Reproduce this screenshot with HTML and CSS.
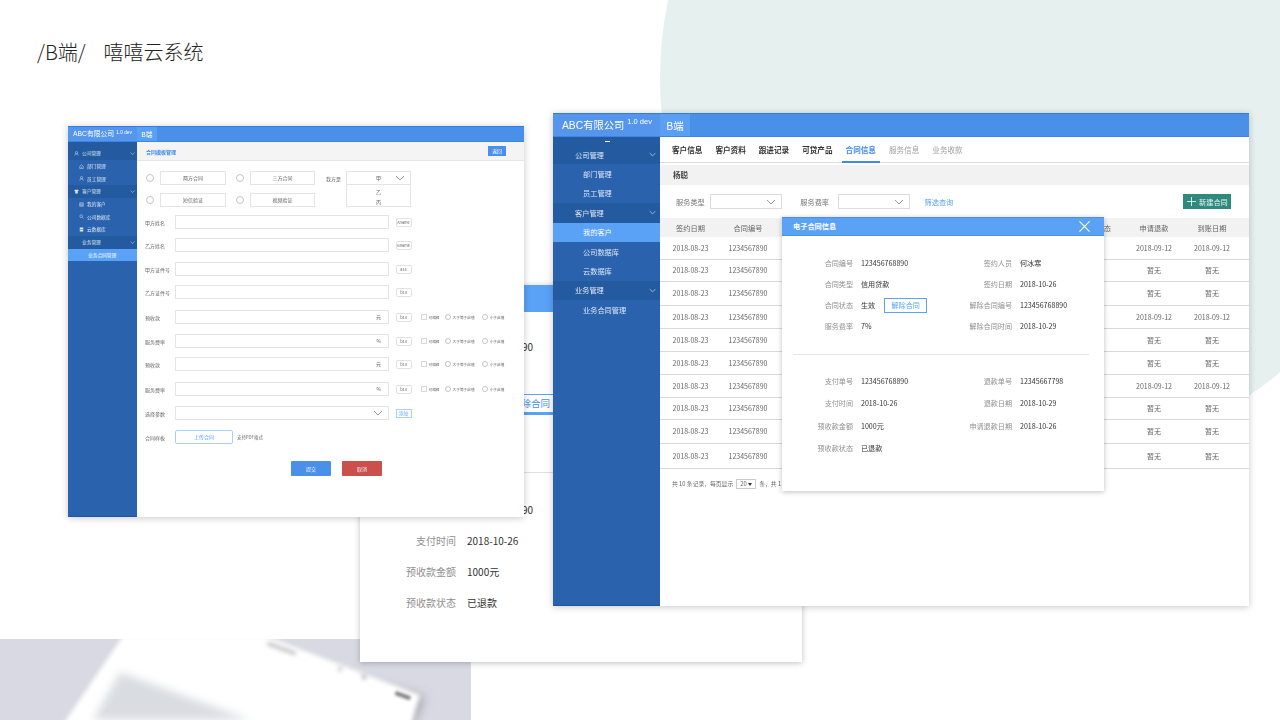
FILE: index.html
```html
<!DOCTYPE html>
<html lang="zh-CN">
<head>
  <meta charset="UTF-8" />
  <title>嘻嘻云系统</title>
  <link rel="stylesheet" href="styles.css">
</head>
<body>
  <svg class="sprite" width="0" height="0">
    <symbol id="chev" viewBox="0 0 10 6"><path d="M1 1l4 4 4-4" fill="none" stroke="currentColor" stroke-width="1"/></symbol>
    <symbol id="user" viewBox="0 0 10 10"><path d="M5 1a2.2 2.2 0 0 1 0 4.600a2.200 2.200 0 0 1 0-4.600zM1.500 9c.3-2.400 1.500-3.400 3.500-3.400S8.200 6.600 8.500 9" fill="none" stroke="currentColor"/></symbol>
    <symbol id="home" viewBox="0 0 10 10"><path d="M1.500 9V4.500L5 1.500l3.500 3V9zM3.500 6.500h3" fill="none" stroke="currentColor"/></symbol>
    <symbol id="shirt" viewBox="0 0 10 10"><path d="M3 1L.5 2.800 1.800 4.600 2.500 4v5h5V4l.7.6 1.300-1.800L7 1 5 2.200z" fill="currentColor"/></symbol>
    <symbol id="list" viewBox="0 0 10 10"><path d="M1.500 1.500h7v7h-7zM1.500 4h7M1.500 6.300h7" fill="none" stroke="currentColor"/></symbol>
    <symbol id="search" viewBox="0 0 10 10"><circle cx="4.300" cy="4.300" r="2.800" fill="none" stroke="currentColor"/><path d="M6.300 6.300L9 9" stroke="currentColor"/></symbol>
    <symbol id="db" viewBox="0 0 10 10"><path d="M1.500 1h7v8h-7z" fill="currentColor"/><path d="M1.500 5h7" stroke="#2a62ad"/></symbol>
  </svg>

  <div class="slide">
    <!-- Page decoration -->
    <div class="bg-circle"></div>
    <div class="photo">
      <svg class="photo-img" viewBox="0 0 471 81" width="471" height="81">
        <polygon class="phone-shadow" points="300,30 424,58 412,85 280,85"/>
        <polygon class="phone" points="123,-3 265,-3 420,56 410,90 60,90"/>
        <polygon class="phone-screen" points="120,33 250,81 93,81"/>
        <rect class="phone-dot" x="396" y="52" width="16" height="4" transform="rotate(20 396 52)"/>
        <rect class="phone-dot faint" x="268" y="3" width="30" height="3" transform="rotate(20 268 3)"/>
        <circle class="phone-dot faint" cx="364" cy="38" r="2.500"/>
        <circle class="phone-dot faint" cx="340" cy="30" r="2"/>
      </svg>
    </div>

    <h1 class="slide-title"><span>/B端/</span><span>嘻嘻云系统</span></h1>

    <!-- Back window: enlarged contract dialog, mostly covered by the other two -->
    <div class="back-dialog">
      <div class="back-head"></div>
      <div class="back-grid back-top">
        <span></span><span class="info-value cut">90</span>
        <span></span><span></span>
        <span></span><span class="info-value"><a class="back-terminate">解除合同</a></span>
      </div>
      <div class="back-line"></div>
      <div class="back-grid">
        <span></span><span class="info-value cut">90</span>
        <span class="info-label">支付时间</span><span class="info-value">2018-10-26</span>
        <span class="info-label">预收款金额</span><span class="info-value">1000元</span>
        <span class="info-label">预收款状态</span><span class="info-value">已退款</span>
      </div>
    </div>

    <!-- Small window: contract template form -->
    <div class="app app-small">
      <div class="app-header">
        <div class="logo">ABC有限公司<sup>1.0 dev</sup></div>
        <div class="header-tab">B端</div>
      </div>
      <div class="app-main">
        <div class="sidebar">
          <div class="side-dots"></div>
          <div class="side-item group"><svg class="side-icon"><use href="#user"/></svg>公司管理<svg class="side-chev"><use href="#chev"/></svg></div>
          <div class="side-item sub"><svg class="side-icon"><use href="#home"/></svg>部门管理</div>
          <div class="side-item sub"><svg class="side-icon"><use href="#user"/></svg>员工管理</div>
          <div class="side-item group"><svg class="side-icon"><use href="#shirt"/></svg>客户管理<svg class="side-chev"><use href="#chev"/></svg></div>
          <div class="side-item sub"><svg class="side-icon"><use href="#list"/></svg>我的客户</div>
          <div class="side-item sub"><svg class="side-icon"><use href="#search"/></svg>公司数据库</div>
          <div class="side-item sub"><svg class="side-icon"><use href="#db"/></svg>云数据库</div>
          <div class="side-item group plain">业务管理<svg class="side-chev"><use href="#chev"/></svg></div>
          <div class="side-item active deep">业务合同管理</div>
        </div>
        <div class="form-page">
          <div class="form-bar"><span>合同模板管理</span><a class="back-btn">返回</a></div>
          <div class="form-top">
            <div class="type-grid">
              <i class="radio big"></i><span class="type-box">两方合同</span>
              <i class="radio big"></i><span class="type-box">三方合同</span>
              <i class="radio big"></i><span class="type-box">短信验证</span>
              <i class="radio big"></i><span class="type-box">视频验证</span>
            </div>
            <span class="party-label">我方是</span>
            <div class="party-select">
              <div class="party-current">甲<svg class="form-chev"><use href="#chev"/></svg></div>
              <div class="party-option first">乙</div>
              <div class="party-option">丙</div>
            </div>
          </div>
          <div class="form-row"><label>甲方姓名</label><div class="field"></div><span class="tag">Aname</span></div>
          <div class="form-row"><label>乙方姓名</label><div class="field"></div><span class="tag">Bname</span></div>
          <div class="form-row wide"><label>甲方证件号</label><div class="field"></div><span class="tag">a14</span></div>
          <div class="form-row"><label>乙方证件号</label><div class="field"></div><span class="tag">b14</span></div>
          <div class="form-row wider"><label>预收款</label><div class="field">元</div><span class="tag">b14</span>
            <div class="rule"><i class="check"></i><span>可编辑</span><i class="radio"></i><span>大于等于此值</span><i class="radio"></i><span>小于此值</span></div></div>
          <div class="form-row wide"><label>服务费率</label><div class="field">%</div><span class="tag">b14</span>
            <div class="rule"><i class="check"></i><span>可编辑</span><i class="radio"></i><span>大于等于此值</span><i class="radio"></i><span>小于此值</span></div></div>
          <div class="form-row"><label>预收款</label><div class="field">元</div><span class="tag">b14</span>
            <div class="rule"><i class="check"></i><span>可编辑</span><i class="radio"></i><span>大于等于此值</span><i class="radio"></i><span>小于此值</span></div></div>
          <div class="form-row wider"><label>服务费率</label><div class="field">%</div><span class="tag">b14</span>
            <div class="rule"><i class="check"></i><span>可编辑</span><i class="radio"></i><span>大于等于此值</span><i class="radio"></i><span>小于此值</span></div></div>
          <div class="form-row wide"><label>选择参数</label><div class="field"><svg class="form-chev"><use href="#chev"/></svg></div><span class="tag add">添加</span></div>
          <div class="form-row wide"><label>合同样板</label><a class="upload">上传合同</a><span class="upload-note">支持PDF格式</span></div>
          <div class="form-actions"><a class="btn btn-blue">提交</a><a class="btn btn-red">取消</a></div>
        </div>
      </div>
    </div>

    <!-- Large window: customer contract list -->
    <div class="app app-large">
      <div class="app-header">
        <div class="logo">ABC有限公司<sup>1.0 dev</sup></div>
        <div class="header-tab">B端</div>
      </div>
      <div class="app-main">
        <div class="sidebar">
          <div class="side-dots"></div>
          <div class="side-item group">公司管理<svg class="side-chev"><use href="#chev"/></svg></div>
          <div class="side-item sub">部门管理</div>
          <div class="side-item sub">员工管理</div>
          <div class="side-item group">客户管理<svg class="side-chev"><use href="#chev"/></svg></div>
          <div class="side-item sub active">我的客户</div>
          <div class="side-item sub">公司数据库</div>
          <div class="side-item sub">云数据库</div>
          <div class="side-item group">业务管理<svg class="side-chev"><use href="#chev"/></svg></div>
          <div class="side-item sub">业务合同管理</div>
        </div>
        <div class="content">
          <div class="tabs">
            <a>客户信息</a><a>客户资料</a><a>跟进记录</a><a>可贷产品</a>
            <a class="current">合同信息</a><a class="muted">服务信息</a><a class="muted">业务收款</a>
          </div>
          <div class="name-bar">杨聪</div>
          <div class="filters">
            <span>服务类型</span><div class="filter-select"><svg class="form-chev"><use href="#chev"/></svg></div>
            <span class="second">服务费率</span><div class="filter-select"><svg class="form-chev"><use href="#chev"/></svg></div>
            <a class="filter-link">筛选查询</a>
            <a class="new-btn"><svg viewBox="0 0 10 10"><path d="M5 0v10M0 5h10" stroke="currentColor" stroke-width="1"/></svg>新建合同</a>
          </div>
          <table class="data-table">
            <colgroup><col class="c1"><col class="c2"><col class="c3"><col class="c4"><col class="c5"></colgroup>
            <thead><tr><th>签约日期</th><th>合同编号</th><th class="status">态</th><th>申请退款</th><th>到账日期</th></tr></thead>
            <tbody>
              <tr><td>2018-08-23</td><td>1234567890</td><td></td><td>2018-09-12</td><td>2018-09-12</td></tr>
              <tr><td>2018-08-23</td><td>1234567890</td><td></td><td>暂无</td><td>暂无</td></tr>
              <tr><td>2018-08-23</td><td>1234567890</td><td></td><td>暂无</td><td>暂无</td></tr>
              <tr><td>2018-08-23</td><td>1234567890</td><td></td><td>2018-09-12</td><td>2018-09-12</td></tr>
              <tr><td>2018-08-23</td><td>1234567890</td><td></td><td>暂无</td><td>暂无</td></tr>
              <tr><td>2018-08-23</td><td>1234567890</td><td></td><td>暂无</td><td>暂无</td></tr>
              <tr><td>2018-08-23</td><td>1234567890</td><td></td><td>2018-09-12</td><td>2018-09-12</td></tr>
              <tr><td>2018-08-23</td><td>1234567890</td><td></td><td>暂无</td><td>暂无</td></tr>
              <tr><td>2018-08-23</td><td>1234567890</td><td></td><td>暂无</td><td>暂无</td></tr>
              <tr><td>2018-08-23</td><td>1234567890</td><td></td><td>暂无</td><td>暂无</td></tr>
            </tbody>
          </table>
          <div class="pager">共 10 条记录，每页显示<span class="page-size">20<i></i></span>条，共 1</div>
        </div>
      </div>

      <!-- Dialog over the table -->
      <div class="dialog">
        <div class="dialog-head">电子合同信息
          <svg class="dialog-close" viewBox="0 0 12 12"><path d="M.5.500l11 11M11.500.500l-11 11" stroke="#fff" stroke-width="1.200"/></svg>
        </div>
        <div class="info-grid info-top">
          <span class="info-label">合同编号</span><span class="info-value">123456768890</span>
          <span class="info-label">签约人员</span><span class="info-value">何冰寒</span>
          <span class="info-label">合同类型</span><span class="info-value">信用贷款</span>
          <span class="info-label">签约日期</span><span class="info-value">2018-10-26</span>
          <span class="info-label">合同状态</span><span class="info-value">生效<a class="terminate">解除合同</a></span>
          <span class="info-label">解除合同编号</span><span class="info-value">123456768890</span>
          <span class="info-label">服务费率</span><span class="info-value">7%</span>
          <span class="info-label">解除合同时间</span><span class="info-value">2018-10-29</span>
        </div>
        <div class="dialog-line"></div>
        <div class="info-grid info-bottom">
          <span class="info-label">支付单号</span><span class="info-value">123456768890</span>
          <span class="info-label">退款单号</span><span class="info-value">12345667798</span>
          <span class="info-label">支付时间</span><span class="info-value">2018-10-26</span>
          <span class="info-label">退款日期</span><span class="info-value">2018-10-29</span>
          <span class="info-label">预收款金额</span><span class="info-value">1000元</span>
          <span class="info-label">申请退款日期</span><span class="info-value">2018-10-26</span>
          <span class="info-label">预收款状态</span><span class="info-value">已退款</span>
        </div>
      </div>
    </div>
  </div>
</body>
</html>
```

FILE: styles.css
```css
/* Basic reset */
* {
  margin: 0;
  padding: 0;
  box-sizing: border-box;
}

body {
  background-color: #fff;
  font-family: "Noto Sans CJK SC", "Liberation Sans", sans-serif;
  overflow: hidden;
}

.sprite {
  position: absolute;
}

/* The slide is a free canvas: windows sit at their own places */
.slide {
  position: relative;
  width: 1280px;
  height: 720px;
  overflow: hidden;
  padding: 37px 37px;
}

.slide-title {
  position: relative;
  display: flex;
  gap: 18px;
  font-size: 20px;
  line-height: 30px;
  font-weight: 300;
  color: #222;
}

.bg-circle {
  position: absolute;
  left: 660px;
  top: -302px;
  width: 760px;
  height: 760px;
  border-radius: 50%;
  background-color: #e6f0ef;
}

.photo {
  position: absolute;
  left: 0;
  top: 639px;
  width: 471px;
  height: 81px;
  overflow: hidden;
  background-color: #d9d9e3;
}

.photo-img {
  display: block;
}
.phone { fill: #fff; filter: blur(2px); }
.phone-shadow { fill: #9a9aa4; filter: blur(6px); }
.phone-screen { fill: #d9dde2; filter: blur(4px); }
.phone-dot { fill: #7c7c80; filter: blur(1.500px); }
.phone-dot.faint { fill: #b4b4b8; filter: blur(2px); }

/* Shared window frame */
.app {
  position: absolute;
  display: flex;
  flex-direction: column;
  background-color: #fff;
  box-shadow: 0 1px 7px rgba(0, 0, 0, 0.22);
}

.app-header {
  display: flex;
  flex: none;
  color: #fff;
  background-color: #4a90e9;
  border-top: 1px solid #2f7de2;
  border-bottom: 1px solid #3f86e4;
}

.logo {
  background-color: #5596ec;
  white-space: nowrap;
  font-family: "Liberation Sans", "Noto Sans CJK SC", sans-serif;
}

.logo sup {
  vertical-align: baseline;
  position: relative;
}

.header-tab {
  background-color: #5b9ff2;
  text-align: center;
}

.app-main {
  display: flex;
  flex: 1;
  min-height: 0;
}

.sidebar {
  flex: none;
  background-color: #2a62ad;
  border-bottom: 1px solid #1c55a6;
  color: #dbe7f7;
}

.side-dots {
  background-color: #245a9f;
  position: relative;
}

.side-item {
  display: flex;
  align-items: center;
  position: relative;
}

.side-item.group {
  background-color: #245a9f;
}

.side-item.active {
  background-color: #5aa2f5;
  color: #fff;
}

.side-chev {
  position: absolute;
  color: #cfe0f5;
}

/* Large window */
.app-large {
  left: 553px;
  top: 113px;
  width: 696px;
  height: 493px;
  filter: blur(0.25px);
}

.app-large .app-header { height: 24px; }
.app-large .logo {
  width: 107px;
  padding-left: 9px;
  font-size: 10.300px;
  line-height: 23px;
}
.app-large .logo sup { font-size: 7.500px; top: -5px; left: 3px; }
.app-large .header-tab { width: 30px; font-size: 10.500px; line-height: 23px; }
.app-large .sidebar { width: 107px; font-size: 7.200px; }
.app-large .side-dots { height: 8px; }
.app-large .side-dots::after {
  content: "";
  position: absolute;
  left: 52px;
  top: 4px;
  width: 5px;
  height: 1px;
  background-color: #fff;
}
.app-large .side-item { height: 19.400px; padding-left: 22px; }
.app-large .side-item.sub { padding-left: 30px; }
.app-large .side-chev { right: 4px; top: 7px; width: 7px; height: 5px; }

.content {
  flex: 1;
  min-width: 0;
  display: flex;
  flex-direction: column;
}

.tabs {
  display: flex;
  height: 26px;
  padding-left: 8px;
  gap: 5px;
  border-bottom: 1px solid #ddd;
  flex: none;
}

.tabs a {
  width: 38.400px;
  text-align: center;
  font-size: 7.600px;
  line-height: 25px;
  font-weight: 700;
  color: #333;
  margin-bottom: -1px;
}
.tabs a.current { color: #3f8ae8; border-bottom: 2px solid #3f8ae8; }
.tabs a.muted { color: #a0a0a0; font-weight: 400; }

.name-bar {
  flex: none;
  height: 20px;
  margin-top: 2px;
  padding-left: 13px;
  background-color: #f2f2f2;
  font-size: 7.500px;
  font-weight: 700;
  line-height: 20px;
  color: #444;
}

.filters {
  flex: none;
  display: flex;
  align-items: center;
  height: 33px;
  padding-left: 16px;
  font-size: 7.200px;
  color: #777;
}

.filter-select {
  position: relative;
  width: 72px;
  height: 15px;
  margin-left: 5px;
  border: 1px solid #ddd;
}

.filters .second { margin-left: 18.500px; margin-right: 3.500px; }

.form-chev {
  position: absolute;
  width: 10px;
  height: 6px;
  right: 5px;
  top: 50%;
  margin-top: -3px;
  color: #999;
}

.filter-link { margin-left: 15px; color: #5aa2f5; }

.new-btn {
  display: flex;
  align-items: center;
  gap: 3px;
  margin-left: auto;
  margin-right: 18px;
  width: 48px;
  height: 15px;
  padding-left: 4px;
  background-color: #2f8a7d;
  color: #e6f5f2;
  font-size: 7.200px;
  white-space: nowrap;
}
.new-btn svg { width: 9px; height: 9px; flex: none; }

.data-table {
  width: 589px;
  table-layout: fixed;
  border-collapse: collapse;
  font-size: 7px;
  color: #666;
}
.c1 { width: 60px; }
.c2 { width: 56px; }
.c4 { width: 58px; }
.c5 { width: 66px; }

.data-table th {
  height: 19px;
  font-size: 7.200px;
  font-weight: 400;
  background-color: #f2f2f2;
  color: #666;
}
.data-table th.status { text-align: right; padding-right: 14px; }
.data-table th:last-child, .data-table td:last-child { padding-right: 8px; }

.data-table td {
  text-align: center;
  height: 23px;
  border-bottom: 1px solid #d9d9d9;
  white-space: nowrap;
}
.data-table th:nth-child(1), .data-table td:nth-child(1) { padding-left: 1px; }
.data-table tr:nth-child(1) td { height: 22px; }
.data-table tr:nth-child(2) td { height: 22px; }
.data-table tr:nth-child(3) td { height: 24px; }
.data-table tr:nth-child(8) td { height: 22px; }
.data-table tr:nth-child(9) td { height: 24px; }
.data-table tr:nth-child(10) td { height: 25px; }

.pager {
  display: flex;
  align-items: center;
  height: 30px;
  padding-left: 12px;
  font-size: 5.800px;
  color: #666;
  white-space: nowrap;
}

.page-size {
  position: relative;
  width: 20px;
  height: 10px;
  margin: 0 3px;
  padding-left: 3px;
  line-height: 8px;
  border: 1px solid #ccc;
}
.page-size i {
  position: absolute;
  right: 3px;
  top: 3px;
  border: 2px solid transparent;
  border-top: 3px solid #333;
  border-bottom: 0;
}

/* Dialog */
.dialog {
  position: absolute;
  left: 229px;
  top: 104px;
  width: 322px;
  height: 274px;
  background-color: #fff;
  box-shadow: 0 1px 5px rgba(0, 0, 0, 0.25);
}

.dialog-head {
  position: relative;
  height: 19px;
  padding-left: 11px;
  background-color: #5aa2f5;
  border: 1px solid #4a90e9;
  border-width: 1px 0;
  color: #fff;
  font-size: 7.200px;
  font-weight: 700;
  line-height: 17px;
}

.dialog-close {
  position: absolute;
  right: 14px;
  top: 3px;
  width: 11px;
  height: 11px;
}

.info-grid {
  display: grid;
  grid-template-columns: 71px 72px 71px 1fr;
  column-gap: 8px;
  align-items: center;
  font-size: 7.100px;
}

.info-top { grid-auto-rows: 21px; padding-top: 16.500px; }
.info-bottom { grid-auto-rows: 22.300px; padding-top: 15.500px; }

.info-label { text-align: right; color: #909090; white-space: nowrap; }
.info-value { color: #333; white-space: nowrap; display: flex; align-items: center; }

.terminate {
  flex: none;
  width: 43px;
  height: 15px;
  margin-left: 9px;
  text-align: center;
  line-height: 13px;
  color: #5aa2f5;
  border: 1px solid #5aa2f5;
}

.dialog-line {
  height: 1px;
  margin: 17px 15px 0 11px;
  background-color: #e6e6e6;
}

/* Back window */
.back-dialog {
  position: absolute;
  left: 360px;
  top: 285px;
  width: 442px;
  height: 377px;
  background-color: #fff;
  box-shadow: 0 1px 6px rgba(0, 0, 0, 0.25);
}

.back-head {
  height: 27px;
  background-color: #5aa2f5;
}

.back-grid {
  display: grid;
  grid-template-columns: 96px 1fr;
  column-gap: 11px;
  grid-auto-rows: 31px;
  align-items: center;
  font-size: 10px;
  padding-top: 21px;
}

.back-top { grid-auto-rows: 29px; padding-top: 20px; padding-bottom: 29px; }

/* only the end of this number shows past the small window */
.info-value.cut { padding-left: 55px; }

.back-terminate {
  width: 60px;
  height: 21px;
  margin-left: 34px;
  text-align: center;
  font-size: 9.500px;
  line-height: 17px;
  color: #4a90e9;
  border: 1px solid #5aa2f5;
  border-bottom-width: 3px;
}

.back-line {
  height: 1px;
  margin: 24px 15px 0;
  background-color: #e0e0e0;
}

/* Small window */
.app-small {
  left: 68px;
  top: 126px;
  width: 456px;
  height: 391px;
  filter: blur(0.35px);
}

.app-small .app-header { height: 16px; }
.app-small .logo {
  width: 69px;
  padding-left: 5px;
  font-size: 6.800px;
  line-height: 14px;
}
.app-small .logo sup { font-size: 4.800px; top: -2px; left: 2px; }
.app-small .header-tab { width: 20px; font-size: 6.800px; line-height: 14px; }
.app-small .sidebar { width: 69px; font-size: 4.700px; }
.app-small .side-dots { height: 5px; }
.app-small .side-item { height: 12.700px; padding-left: 14px; }
.app-small .side-item.sub { padding-left: 19px; }
.app-small .side-item.plain { padding-left: 14px; }
.app-small .side-item.deep { padding-left: 20px; }
.app-small .side-chev { right: 2px; top: 5px; width: 5px; height: 3px; }

.side-icon {
  position: absolute;
  width: 5px;
  height: 5px;
  left: 6px;
  top: 4px;
  color: #dbe7f7;
}
.side-item.sub .side-icon { left: 11px; }

.form-page {
  flex: 1;
  min-width: 0;
}

.form-bar {
  display: flex;
  align-items: center;
  justify-content: space-between;
  height: 19px;
  padding: 0 18px 0 9px;
  background-color: #f4f4f4;
  border-bottom: 1px solid #e6e6e6;
  font-size: 5px;
  font-weight: 700;
  color: #3f8ae8;
}

.back-btn {
  width: 18px;
  height: 10px;
  text-align: center;
  line-height: 10px;
  background-color: #4a90e9;
  color: #fff;
  font-weight: 400;
  font-size: 4.800px;
}

.form-top {
  display: flex;
  align-items: flex-start;
  margin: 10px 0 8px 9px;
  font-size: 5px;
  color: #666;
}

.type-grid {
  display: grid;
  grid-template-columns: 14px 76px 14px 65px;
  grid-auto-rows: 14px;
  row-gap: 8px;
  align-items: center;
}

.type-box {
  height: 14px;
  line-height: 12px;
  text-align: center;
  border: 1px solid #e4e4e4;
}
.type-box:nth-child(4n+2) { margin-right: 10px; }

.radio {
  flex: none;
  display: block;
  width: 6.500px;
  height: 6.500px;
  border: 1px solid #c4c4c4;
  border-radius: 50%;
}
.radio.big { width: 8px; height: 8px; }

.party-label { margin: 4px 0 0 11px; white-space: nowrap; }

.party-select {
  width: 65px;
  height: 36px;
  margin-left: 5px;
  border: 1px solid #e4e4e4;
  text-align: center;
}
.party-current {
  position: relative;
  height: 13px;
  line-height: 11px;
  border-bottom: 1px solid #e4e4e4;
}
.party-option { height: 10px; line-height: 10px; }
.party-option.first { margin-top: 2px; }

.form-row {
  display: flex;
  align-items: center;
  height: 14px;
  margin: 9px 0 0 8px;
  font-size: 5px;
  color: #666;
}
.form-top + .form-row { margin-top: 0; }
.form-row.wide { margin-top: 10px; }
.form-row.wider { margin-top: 11px; }
.form-row label { flex: none; width: 30px; white-space: nowrap; }

.field {
  position: relative;
  flex: none;
  width: 214px;
  height: 14px;
  padding-right: 7px;
  text-align: right;
  line-height: 12px;
  border: 1px solid #e4e4e4;
}

.tag {
  flex: none;
  width: 16px;
  height: 9px;
  margin-left: 6.500px;
  text-align: center;
  font-size: 3.800px;
  line-height: 7px;
  border: 1px solid #e2e2e2;
  border-radius: 2px;
}
.tag.add { color: #5aa2f5; border-color: #a9d0fa; border-radius: 0; font-size: 4.500px; }

.rule {
  display: flex;
  align-items: center;
  margin-left: 9px;
  font-size: 3.700px;
  white-space: nowrap;
}
.rule span { margin-left: 1.500px; }
.rule .radio { margin-left: 5px; }
.rule span:nth-of-type(2) { margin-right: 2px; }

.check {
  display: block;
  flex: none;
  width: 6.500px;
  height: 6.500px;
  border: 1px solid #d8d8d8;
}

.upload {
  flex: none;
  width: 58px;
  height: 14px;
  text-align: center;
  line-height: 12px;
  color: #5aa2f5;
  border: 1px solid #a9d0fa;
  border-radius: 2px;
}

.upload-note { margin-left: 4px; font-size: 4.400px; }

.form-actions {
  display: flex;
  gap: 11px;
  margin: 17px 0 0 154px;
}

.btn {
  width: 40px;
  height: 15px;
  text-align: center;
  font-size: 5px;
  line-height: 15px;
  color: #f2f6fc;
  border-radius: 1px;
}
.btn-blue { background-color: #4a90e9; }
.btn-red { background-color: #cb4f4b; }
```
